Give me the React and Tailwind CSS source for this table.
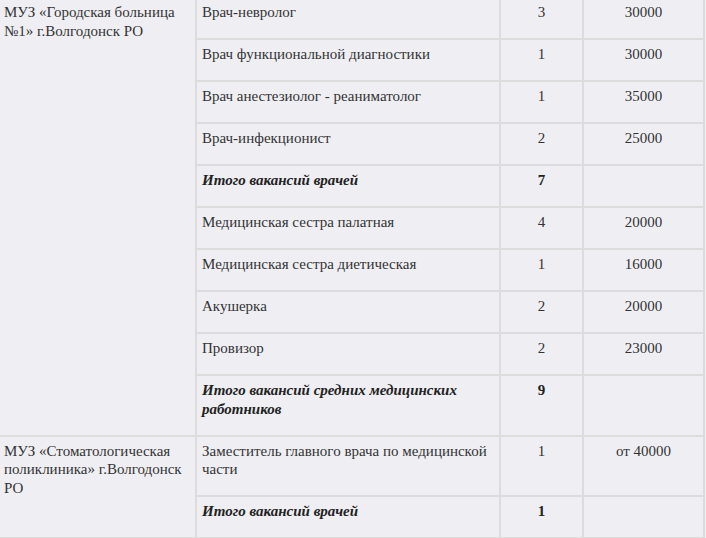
const rows = [
	{ org: "МУЗ «Городская больница №1» г.Волгодонск РО", span: 10, title: "Врач-невролог", count: "3", pay: "30000" },
	{ title: "Врач функциональной диагностики", count: "1", pay: "30000" },
	{ title: "Врач анестезиолог - реаниматолог", count: "1", pay: "35000" },
	{ title: "Врач-инфекционист", count: "2", pay: "25000" },
	{ title: "Итого вакансий врачей", count: "7", total: true },
	{ title: "Медицинская сестра палатная", count: "4", pay: "20000" },
	{ title: "Медицинская сестра диетическая", count: "1", pay: "16000" },
	{ title: "Акушерка", count: "2", pay: "20000" },
	{ title: "Провизор", count: "2", pay: "23000" },
	{ title: "Итого вакансий средних медицинских работников", count: "9", total: true },
	{ org: "МУЗ «Стоматологическая поликлиника» г.Волгодонск РО", span: 2, title: "Заместитель главного врача по медицинской части", count: "1", pay: "от 40000" },
	{ title: "Итого вакансий врачей", count: "1", total: true },
];

// таблица в quirks-режиме не наследует шрифт — задаём его на ячейках
const cell = "border-2 border-[#dcdcdc] align-top px-[5px] pt-[5px] pb-[16.5px] font-['Liberation_Serif',serif] text-[15px] leading-[18.5px] text-[#333]";

export default function App() {
	return (
		<div className="w-[706px] h-[538px] overflow-hidden bg-[#efeff3]">
			<table className="table-fixed border-collapse w-[706px] -ml-[3px] -mt-[4px]">
				<colgroup>
					<col className="w-[198px]" />
					<col className="w-[304px]" />
					<col className="w-[83px]" />
					<col className="w-[121px]" />
				</colgroup>
				<tbody>
					{rows.map((r, i) => (
						<tr key={i}>
							{r.org && (
								<td rowSpan={r.span} className={cell}>
									{r.org}
								</td>
							)}
							<td className={`${cell} ${r.total ? "font-bold italic !text-[#222]" : ""}`}>{r.title}</td>
							<td className={`${cell} text-center ${r.total ? "font-bold !text-[#222]" : ""}`}>{r.count}</td>
							<td className={`${cell} text-center`}>{r.pay}</td>
						</tr>
					))}
				</tbody>
			</table>
		</div>
	);
}
